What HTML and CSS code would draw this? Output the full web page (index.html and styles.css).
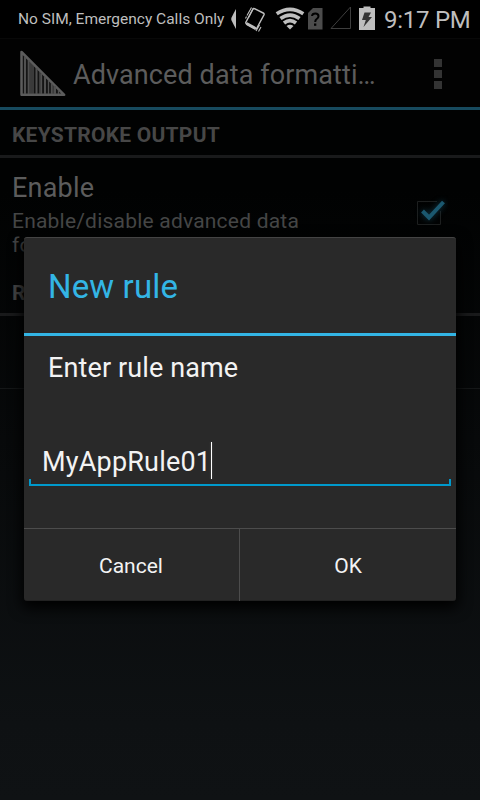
FILE: index.html
```html
<!DOCTYPE html>
<html lang="en">
<head>
<meta charset="utf-8">
<title>Advanced data formatting</title>
<link rel="stylesheet" href="styles.css">
</head>
<body>
<div class="screen">
  <header class="status">
    <span class="carrier">No SIM, Emergency Calls Only</span>
    <svg class="status-icons" width="148" height="38" viewBox="230 0 148 38">
      <path d="M236 9v20q-2.500-4.500-4.700-9v-2q2.200-4.500 4.700-9z" fill="#bebebe"/>
      <g fill="none" stroke="#bebebe">
        <path d="M254.500 8.700l8.700 4.300q1.300.7.7 2l-7 13q-.7 1.300-2 .6l-8.200-4.600q-1.300-.7-.7-2l6.700-12.500q.6-1.200 1.800-.8z" stroke-width="1.500"/>
        <path d="M246.500 23.500l9 5" stroke-width="3"/>
        <path d="M247 15.500l4.500-8M248.500 17.500l5-9.500M245.500 18.500l1-2M256 31l3.500-6M258.500 31.500l2.500-4.500" stroke-width="1.100"/>
      </g>
      <g fill="none" stroke="#bebebe" stroke-width="3.700">
        <path d="M276.700 13.800Q290 5 303.300 13.800"/>
        <path d="M280.500 18.600Q290 11.500 299.500 18.600"/>
        <path d="M284 23Q290 18.200 296 23"/>
      </g>
      <path d="M286.500 26q3.500-2.500 7 0l-3.500 3.500z" fill="#bebebe"/>
      <path d="M313 8h9.500v21.500H308V13z" fill="#4c4c4c"/>
      <path d="M312 16q.3-2.500 3.300-2.500 3.200 0 3.200 2.700 0 1.700-1.800 2.800-1.500 1-1.500 3" fill="none" stroke="#000" stroke-width="2"/>
      <path d="M314 23.500h2.300v2.300H314z"/>
      <path d="M350.500 7v21.500H331z" fill="none" stroke="#3e3e3e"/>
      <path d="M363.500 6.500h7V8h4.500v22h-16V8h4.500z" fill="#bebebe"/>
      <path d="M364.500 12.500h6.500l-2.500 4.500h3.500l-8.500 10 2.300-7h-3.800z" fill="#333"/>
    </svg>
    <span class="clock">9:17 PM</span>
  </header>
  <main class="app">
    <div class="action-bar">
      <svg class="logo" width="48" height="48" viewBox="19 50 48 48">
        <path d="M21.500 53v42.800h42.700z" fill="#141414" stroke="#5c5c5c" stroke-width="2.500" stroke-linejoin="round"/>
        <g stroke="#505050" fill="none">
          <path d="M25 58v37M28.700 61v34M36.500 69v26M45 78v17M55 87v8" stroke-width="2"/>
          <path d="M31 64v31M33 66v29M40 73v22M41.500 75v20M48.500 81v14M51.500 84v11M53 86v9M58.500 91v4" stroke-width="1.300"/>
        </g>
      </svg>
      <h1 class="title">Advanced data formatti…</h1>
      <svg class="menu" width="8" height="30" viewBox="0 0 8 30"><path d="M0 0h8v8H0zM0 11h8v8H0zM0 22h8v8H0z" fill="#333"/></svg>
    </div>
    <h2 class="section">KEYSTROKE OUTPUT</h2>
    <div class="pref">
      <div class="pref-text">
        <div class="pref-name">Enable</div>
        <div class="pref-desc">Enable/disable advanced data<br>formatting</div>
      </div>
      <svg class="check" width="36" height="36" viewBox="412 195 36 36">
        <path d="M437 201.500H417.500v23h23V211" fill="none" stroke="#1d1f1f"/>
        <path class="tick" d="M422.500 211l6.500 6.500L443.500 202" fill="none" stroke="#1b586f" stroke-width="4"/>
      </svg>
    </div>
    <h2 class="section">RULES</h2>
    <div class="empty-row"></div>
  </main>
  <section class="dialog">
    <h2 class="dialog-title">New rule</h2>
    <div class="dialog-body">
      <label class="prompt">Enter rule name</label>
      <div class="field"><span class="value">MyAppRule01</span><span class="caret"></span></div>
    </div>
    <div class="buttons">
      <div class="button cancel">Cancel</div>
      <div class="button">OK</div>
    </div>
  </section>
</div>
</body>
</html>
```
FILE: styles.css
```css
* { box-sizing: border-box; }
body { margin: 0; background: #000; font-family: Roboto, "Liberation Sans", sans-serif; }
h1, h2 { margin: 0; font-weight: 400; }
svg { display: block; flex: none; }
.screen { position: relative; width: 480px; height: 800px; overflow: hidden; }
.status { height: 38px; display: flex; align-items: center; padding-left: 18px; background: #000; color: #bebebe; white-space: nowrap; }
.carrier { width: 212px; font-size: 15.5px; }
.clock { font-size: 24px; letter-spacing: -0.25px; margin-left: 6px; padding-top: 1px; }
.app { height: 762px; background: linear-gradient(#010202 0, #010202 20%, #0e1113 90%, #0f1214 100%); color: #5c5c5c; }
.action-bar { height: 72px; display: flex; align-items: center; padding: 0 38px 0 19px; background: #020202; border-top: 1px solid #080808; border-bottom: 3px solid #174a5e; }
.title { flex: 1; margin-left: 6px; font-size: 27px; letter-spacing: 0.1px; white-space: nowrap; padding-top: 4px; }
.menu { margin-top: 2px; }
.section { height: 48px; padding: 2px 12px 0; line-height: 46px; border-bottom: 3px solid #191a1b; color: #474747; font-size: 21px; font-weight: 700; letter-spacing: 0.25px; }
.pref { height: 110px; display: flex; justify-content: space-between; padding: 14px 32px 0 12px; }
.pref-name { font-size: 27px; line-height: 32px; letter-spacing: 0.2px; }
.pref-desc { margin-top: 5px; font-size: 21px; line-height: 24px; letter-spacing: 0.21px; color: #454646; }
.check { margin-top: 23px; }
.tick { filter: drop-shadow(0 0 3px #123b4b); }
.empty-row { height: 73px; border-bottom: 1px solid #151718; }
.dialog { position: absolute; left: 24px; top: 237px; width: 432px; height: 364px; background: #292929; border-radius: 3px; border-top: 1px solid #444; border-bottom: 1px solid #222; box-shadow: 0 5px 14px 2px #000; color: #f3f3f3; }
.dialog-title { height: 98px; padding-left: 24px; line-height: 98px; border-bottom: 3px solid #33b5e5; color: #33b5e5; font-size: 33px; letter-spacing: 0.15px; }
.dialog-body { height: 192px; padding: 16px 5px 0; }
.prompt { display: block; padding-left: 19px; font-size: 27px; line-height: 32px; letter-spacing: 0.12px; }
.field { height: 50px; margin-top: 52px; padding: 7px 13px 0; display: flex; align-items: flex-start; background: linear-gradient(#0099cc, #0099cc) 0 100% / 100% 2px no-repeat, linear-gradient(#0099cc, #0099cc) 0 100% / 2px 7px no-repeat, linear-gradient(#0099cc, #0099cc) 100% 100% / 2px 7px no-repeat; font-size: 27px; line-height: 38px; letter-spacing: 0.2px; }
.caret { width: 1px; height: 37px; margin-top: -1px; background: #fff; box-shadow: 0 0 2px #666; }
.buttons { height: 73px; display: flex; border-top: 1px solid #4c4c4c; }
.button { width: 216px; display: flex; align-items: center; justify-content: center; font-size: 21px; padding-top: 1px; }
.cancel { border-right: 1px solid #4c4c4c; padding-right: 1px; }
```
